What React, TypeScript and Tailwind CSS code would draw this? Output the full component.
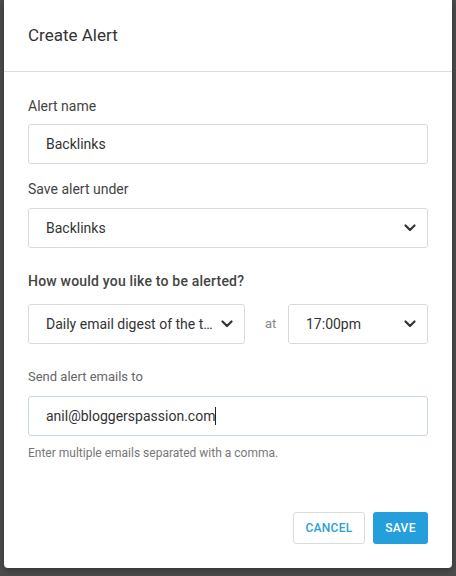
import React from "react";

function Chevron() {
  return (
    <svg width="12" height="8" viewBox="0 0 12 8" className="shrink-0">
      <path d="M1.5 1.5 L6 6 L10.5 1.5" fill="none" stroke="#333" strokeWidth="2.2" strokeLinecap="round" strokeLinejoin="round" />
    </svg>
  );
}

export default function App() {
  return (
    <div className="w-[456px] h-[576px] bg-[#4c4c4c] overflow-hidden" style={{ fontFamily: "Roboto, 'Liberation Sans', sans-serif" }}>
      <div className="ml-[4px] w-[448px] h-[568px] bg-white rounded-b-[4px] flex flex-col shadow-[0_2px_6px_rgba(0,0,0,0.35)]">
        <div className="h-[72px] border-b border-[#dcdcdc] flex items-center px-[24px]">
          <span className="text-[17px] text-[#333]">Create Alert</span>
        </div>
        <div className="px-[24px] pt-[24px] flex flex-col">
          <div className="text-[14px] leading-[20px] text-[#444]">Alert name</div>
          <div className="mt-[8px] h-[40px] border border-[#d9d9d9] rounded-[3px] flex items-center px-[17px] text-[14px] text-[#333]">Backlinks</div>
          <div className="mt-[15px] text-[14px] leading-[20px] text-[#444]">Save alert under</div>
          <div className="mt-[9px] h-[40px] border border-[#d9d9d9] rounded-[3px] flex items-center justify-between pl-[17px] pr-[11px] text-[14px] text-[#333]">
            <span>Backlinks</span>
            <Chevron />
          </div>
          <div className="mt-[23px] text-[14px] leading-[20px] font-medium text-[#444] tracking-[0.2px]">How would you like to be alerted?</div>
          <div className="mt-[13px] flex items-center">
            <div className="w-[217px] h-[40px] border border-[#d9d9d9] rounded-[3px] flex items-center justify-between pl-[17px] pr-[11px] text-[14px] text-[#333]">
              <span className="whitespace-nowrap">Daily email digest of the t…</span>
              <Chevron />
            </div>
            <span className="w-[43px] pl-[20px] text-[13px] text-[#888]">at</span>
            <div className="w-[140px] h-[40px] border border-[#d9d9d9] rounded-[3px] flex items-center justify-between pl-[17px] pr-[11px] text-[14px] text-[#333]">
              <span>17:00pm</span>
              <Chevron />
            </div>
          </div>
          <div className="mt-[24px] text-[13px] leading-[18px] text-[#666]">Send alert emails to</div>
          <div className="mt-[10px] h-[40px] border border-[#c9d9e2] rounded-[3px] flex items-center px-[17px] text-[14px] text-[#333]">
            <span>anil@bloggerspassion.com</span>
            <span className="w-[1px] h-[18px] bg-[#222]"></span>
          </div>
          <div className="mt-[9px] text-[12px] leading-[16px] text-[#777]">Enter multiple emails separated with a comma.</div>
          <div className="mt-[51px] flex justify-end gap-[8px]">
            <button className="w-[72px] h-[32px] border border-[#dcdcdc] rounded-[3px] text-[12px] font-medium text-[#2a9fd8] tracking-[0.3px] bg-white">CANCEL</button>
            <button className="w-[55px] h-[32px] rounded-[3px] text-[12px] font-medium text-white tracking-[0.3px] bg-[#259fdc]">SAVE</button>
          </div>
        </div>
      </div>
    </div>
  );
}
